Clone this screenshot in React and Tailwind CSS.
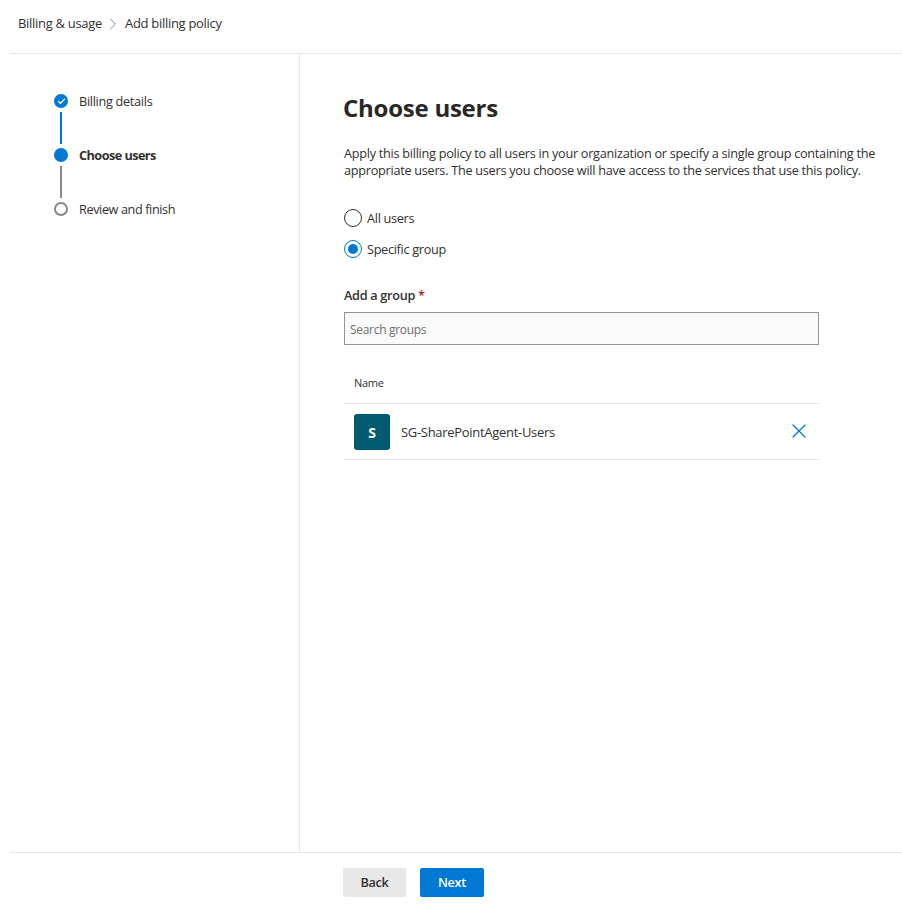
import React from "react";
import { Check, X, ChevronRight } from "lucide-react";

const App = () => {
  return (
    <div className="h-[913px] w-[902px] flex flex-col bg-white text-[#323130] text-[12.7px] font-['Open_Sans',sans-serif] tracking-[-0.3px] overflow-hidden">
      {/* Breadcrumb */}
      <div className="h-[53px] shrink-0 flex items-center pl-[18px] pb-[6px] text-[13px]">
        <span>Billing &amp; usage</span>
        <ChevronRight className="w-[20px] h-[20px] ml-[1px] mr-[2px] text-[#8a8886]" strokeWidth={1.2} />
        <span>Add billing policy</span>
      </div>

      <div className="flex-1 ml-[10px] flex border-t border-[#e8e8e8] min-h-0">
        {/* Steps */}
        <aside className="w-[290px] shrink-0 border-r border-[#e8e8e8] pt-[40px] pl-[44px]">
          <div className="flex items-center gap-[11px] h-[14px]">
            <div className="w-[14px] h-[14px] rounded-full bg-[#0078d4] flex items-center justify-center">
              <Check className="w-[9px] h-[9px] text-white" strokeWidth={3.5} />
            </div>
            <span className="pt-[2px]">Billing details</span>
          </div>
          <div className="w-[2px] h-[32px] bg-[#0078d4] ml-[6px] my-[4px]" />
          <div className="flex items-center gap-[11px] h-[14px]">
            <div className="w-[14px] h-[14px] rounded-full bg-[#0078d4]" />
            <span className="pt-[2px] font-bold tracking-[-0.55px]">Choose users</span>
          </div>
          <div className="w-[2px] h-[32px] bg-[#8a8886] ml-[6px] my-[4px]" />
          <div className="flex items-center gap-[11px] h-[14px]">
            <div className="w-[14px] h-[14px] rounded-full border-2 border-[#8a8886]" />
            <span className="pt-[2px] tracking-[-0.4px]">Review and finish</span>
          </div>
        </aside>

        {/* Main */}
        <main className="flex-1 pl-[44px] pt-[36px]">
          <h1 className="text-[24px] leading-[36px] font-bold text-[#292827] tracking-[-0.25px] -ml-[1px]">Choose users</h1>
          <p className="mt-[19px] w-[540px] leading-[17px] tracking-[-0.27px]">
            Apply this billing policy to all users in your organization or specify a single group containing the appropriate users. The users you choose will have access to the services that use this policy.
          </p>
          <div className="mt-[30px] flex items-center gap-[5px] h-[18px]">
            <div className="w-[18px] h-[18px] rounded-full border border-[#323130]" />
            <span className="pt-[2px]">All users</span>
          </div>
          <div className="mt-[13px] flex items-center gap-[5px] h-[18px]">
            <div className="w-[18px] h-[18px] rounded-full border border-[#0078d4] flex items-center justify-center">
              <div className="w-[10px] h-[10px] rounded-full bg-[#0078d4]" />
            </div>
            <span className="pt-[2px]">Specific group</span>
          </div>
          <div className="mt-[28px] font-semibold leading-[18px]">
            Add a group <span className="text-[#a4262c]">*</span>
          </div>
          <div className="mt-[8px] w-[475px] h-[33px] border border-[#949494] bg-[#fafafa] flex items-center pl-[5px] pt-[2px] text-[12px] text-[#707070]">
            Search groups
          </div>
          <div className="w-[475px] mt-[20px]">
            <div className="h-[39px] border-b border-[#e8e8e8] flex items-center pl-[10px] pb-[1px] text-[11px] font-medium">Name</div>
            <div className="h-[56px] border-b border-[#e8e8e8] flex items-center pl-[10px] pr-[8px]">
              <div className="w-[36px] h-[36px] rounded-[3px] bg-[#005b70] flex items-center justify-center pt-[2px] text-[14px] text-white font-bold">S</div>
              <span className="ml-[11px] pt-[2px] text-[13px] font-medium flex-1">SG-SharePointAgent-Users</span>
              <X className="w-[24px] h-[24px] -mt-[1px] text-[#0078d4]" strokeWidth={1.2} />
            </div>
          </div>
        </main>
      </div>

      {/* Footer */}
      <div className="h-[61px] shrink-0 ml-[10px] border-t border-[#e8e8e8] pl-[333px] pt-[15px] flex gap-[14px] items-start">
        <button className="w-[63px] h-[29px] rounded-[2px] bg-[#e8e8e8] font-semibold">Back</button>
        <button className="w-[64px] h-[29px] rounded-[2px] bg-[#0078d4] text-white font-semibold">Next</button>
      </div>
    </div>
  );
};

export default App;
